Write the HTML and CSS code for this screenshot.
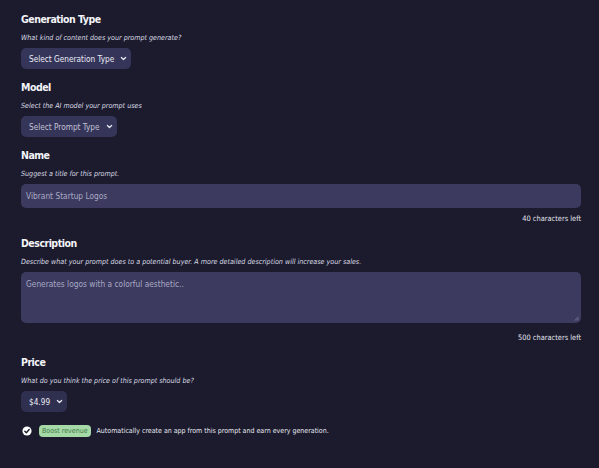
FILE: index.html
```html
<!DOCTYPE html>
<html>
<head>
<meta charset="utf-8">
<link rel="stylesheet" href="styles.css">
</head>
<body>
<form class="form">
  <section class="field">
    <h2 class="label">Generation Type</h2>
    <p class="hint">What kind of content does your prompt generate?</p>
    <div class="select">Select Generation Type <svg class="chev" viewBox="0 0 10 10"><path d="M2 3.5 L5 6.5 L8 3.5" /></svg></div>
  </section>
  <section class="field">
    <h2 class="label">Model</h2>
    <p class="hint">Select the AI model your prompt uses</p>
    <div class="select select-model">Select Prompt Type <svg class="chev" viewBox="0 0 10 10"><path d="M2 3.5 L5 6.5 L8 3.5" /></svg></div>
  </section>
  <section class="field">
    <h2 class="label">Name</h2>
    <p class="hint">Suggest a title for this prompt.</p>
    <div class="input">Vibrant Startup Logos</div>
    <p class="count">40 characters left</p>
  </section>
  <section class="field">
    <h2 class="label">Description</h2>
    <p class="hint">Describe what your prompt does to a potential buyer. A more detailed description will increase your sales.</p>
    <div class="textarea">Generates logos with a colorful aesthetic..<svg class="grip" viewBox="0 0 6 6"><path d="M5.5 1 L1 5.5 M5.5 3.5 L3.5 5.5" /></svg></div>
    <p class="count count-desc">500 characters left</p>
  </section>
  <section class="field">
    <h2 class="label">Price</h2>
    <p class="hint">What do you think the price of this prompt should be?</p>
    <div class="select select-price">$4.99 <svg class="chev" viewBox="0 0 10 10"><path d="M2 3.5 L5 6.5 L8 3.5" /></svg></div>
    <div class="boost">
      <svg class="check" viewBox="0 0 12 12"><circle cx="6" cy="6" r="5.5" /><path d="M3.4 6.2 L5.2 8 L8.6 4.3" /></svg>
      <span class="badge">Boost revenue</span>
      <span class="boost-text">Automatically create an app from this prompt and earn every generation.</span>
    </div>
  </section>
</form>
</body>
</html>
```
FILE: styles.css
```css
html, body {
  margin: 0;
  background: #1b1b2d;
}
body {
  font-family: "DejaVu Sans Condensed", "DejaVu Sans", sans-serif;
  color: #ffffff;
}
.form {
  display: flex;
  flex-direction: column;
  padding: 12px 18px 0 21px;
}
.field {
  display: flex;
  flex-direction: column;
  align-items: flex-start;
}
.field + .field {
  margin-top: 11px;
}
.label {
  margin: 0;
  font-size: 10.5px;
  font-weight: bold;
  letter-spacing: -0.5px;
  line-height: 14px;
  color: #f4f4f8;
}
.hint {
  margin: 7px 0 0;
  font-size: 7.1px;
  font-style: italic;
  line-height: 10px;
  color: #dcdce6;
}
.select {
  margin-top: 5px;
  display: flex;
  align-items: center;
  gap: 6px;
  height: 21px;
  padding: 0 4px 0 8px;
  box-sizing: border-box;
  border-radius: 5px;
  background: #35355a;
  font-size: 8.2px;
  color: #ececf4;
}
.select-model {
  color: #c2c2d4;
}
.select-price {
  background: #2f2f4f;
}
.chev {
  width: 7px;
  height: 7px;
  fill: none;
  stroke: #e6e6f0;
  stroke-width: 1.8;
  stroke-linecap: round;
  stroke-linejoin: round;
}
.input {
  margin-top: 5px;
  align-self: stretch;
  height: 24px;
  box-sizing: border-box;
  display: flex;
  align-items: center;
  padding: 0 5px;
  border-radius: 5px;
  background: #3c3b5f;
  font-size: 8.3px;
  color: #a9a8c4;
}
.textarea {
  position: relative;
  margin-top: 5px;
  align-self: stretch;
  height: 51px;
  box-sizing: border-box;
  padding: 7px 5px;
  border-radius: 5px;
  background: #3c3b5f;
  font-size: 8.3px;
  line-height: 10px;
  color: #a9a8c4;
}
.grip {
  position: absolute;
  right: 2px;
  bottom: 2px;
  width: 5px;
  height: 5px;
  fill: none;
  stroke: #9b9ab8;
  stroke-width: 0.8;
}
.count {
  align-self: flex-end;
  margin: 6px 0 1px;
  font-size: 7.4px;
  line-height: 10px;
  color: #e4e4ee;
}
.count-desc {
  margin-top: 10px;
}
.boost {
  margin-top: 13px;
  height: 12px;
  display: flex;
  align-items: center;
  gap: 6px;
  padding-left: 1px;
}
.check {
  width: 10px;
  height: 10px;
  margin-right: 1px;
}
.check circle {
  fill: #ffffff;
}
.check path {
  fill: none;
  stroke: #1b1b2d;
  stroke-width: 1.7;
  stroke-linecap: round;
  stroke-linejoin: round;
}
.badge {
  background: #a6d9a8;
  color: #3e7a45;
  font-size: 7px;
  line-height: 12px;
  padding: 0 3px;
  border-radius: 4px;
}
.boost-text {
  font-size: 7px;
  color: #e8e8f0;
}
```
